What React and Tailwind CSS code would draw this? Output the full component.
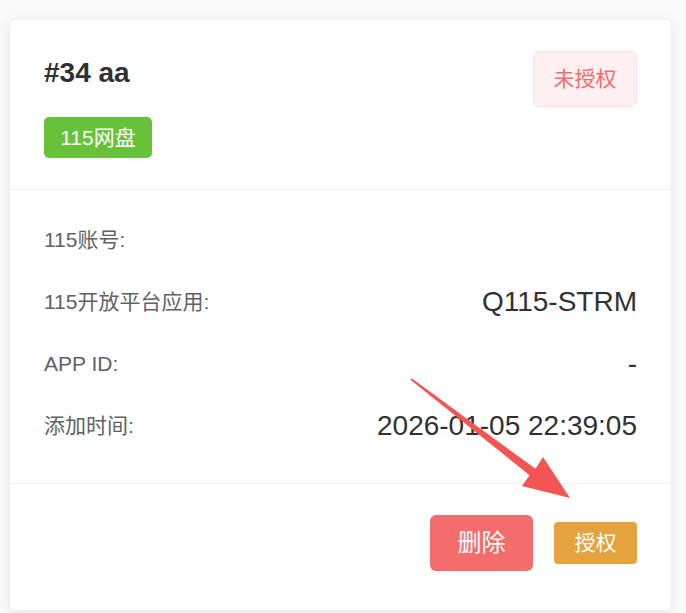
import React from "react";

const font = { fontFamily: '"Liberation Sans", "Noto Sans CJK SC", Arial, sans-serif' };

function Row({ label, value }) {
  return (
    <div className="flex h-[62px] items-center justify-between">
      <span className="text-[21px] leading-[30px] text-[#606266]">{label}</span>
      <span className="text-[28px] leading-[34px] text-[#303133]">{value}</span>
    </div>
  );
}

export default function App() {
  return (
    <div
      className="relative h-[613px] w-[686px] overflow-hidden bg-[#fafafa] pl-[9px] pt-[19px]"
      style={font}
    >
      <div className="flex h-[592px] w-[663px] flex-col rounded-[6px] border border-[#ebeef5] bg-white shadow-[0_2px_12px_rgba(0,0,0,0.08)]">
        <div className="flex items-start justify-between border-b border-[#ebeef5] px-[34px] pb-[31px] pt-[31px]">
          <div className="flex flex-col items-start">
            <div className="mt-[2px] text-[28px] font-bold leading-[40px] text-[#303133]">#34 aa</div>
            <div className="mt-[24px] flex h-[41px] w-[108px] items-center justify-center rounded-[5px] bg-[#67c23a] text-[21px] text-white">
              115网盘
            </div>
          </div>
          <div className="flex h-[56px] w-[104px] items-center justify-center rounded-[6px] border border-[#fde2e2] bg-[#fef0f0] text-[21px] text-[#f56c6c]">
            未授权
          </div>
        </div>
        <div className="flex flex-col border-b border-[#ebeef5] px-[34px] pb-[26px] pt-[19px]">
          <Row label="115账号:" value="" />
          <Row label="115开放平台应用:" value="Q115-STRM" />
          <Row label="APP ID:" value="-" />
          <Row label="添加时间:" value="2026-01-05 22:39:05" />
        </div>
        <div className="flex items-center justify-end gap-[21px] px-[34px] pt-[31px]">
          <button className="flex h-[56px] w-[103px] items-center justify-center rounded-[6px] bg-[#f56c6c] text-[24px] text-white">
            删除
          </button>
          <button className="flex h-[42px] w-[83px] items-center justify-center rounded-[4px] bg-[#e6a23c] text-[21px] text-white">
            授权
          </button>
        </div>
      </div>
      <svg className="pointer-events-none absolute left-0 top-0" width="686" height="613" viewBox="0 0 686 613">
        <polygon
          points="410.4,379.8 411.6,378.2 535.5,468.8 543,457 570,498 522,486 529.5,475.2"
          fill="#f55454"
        />
      </svg>
    </div>
  );
}
